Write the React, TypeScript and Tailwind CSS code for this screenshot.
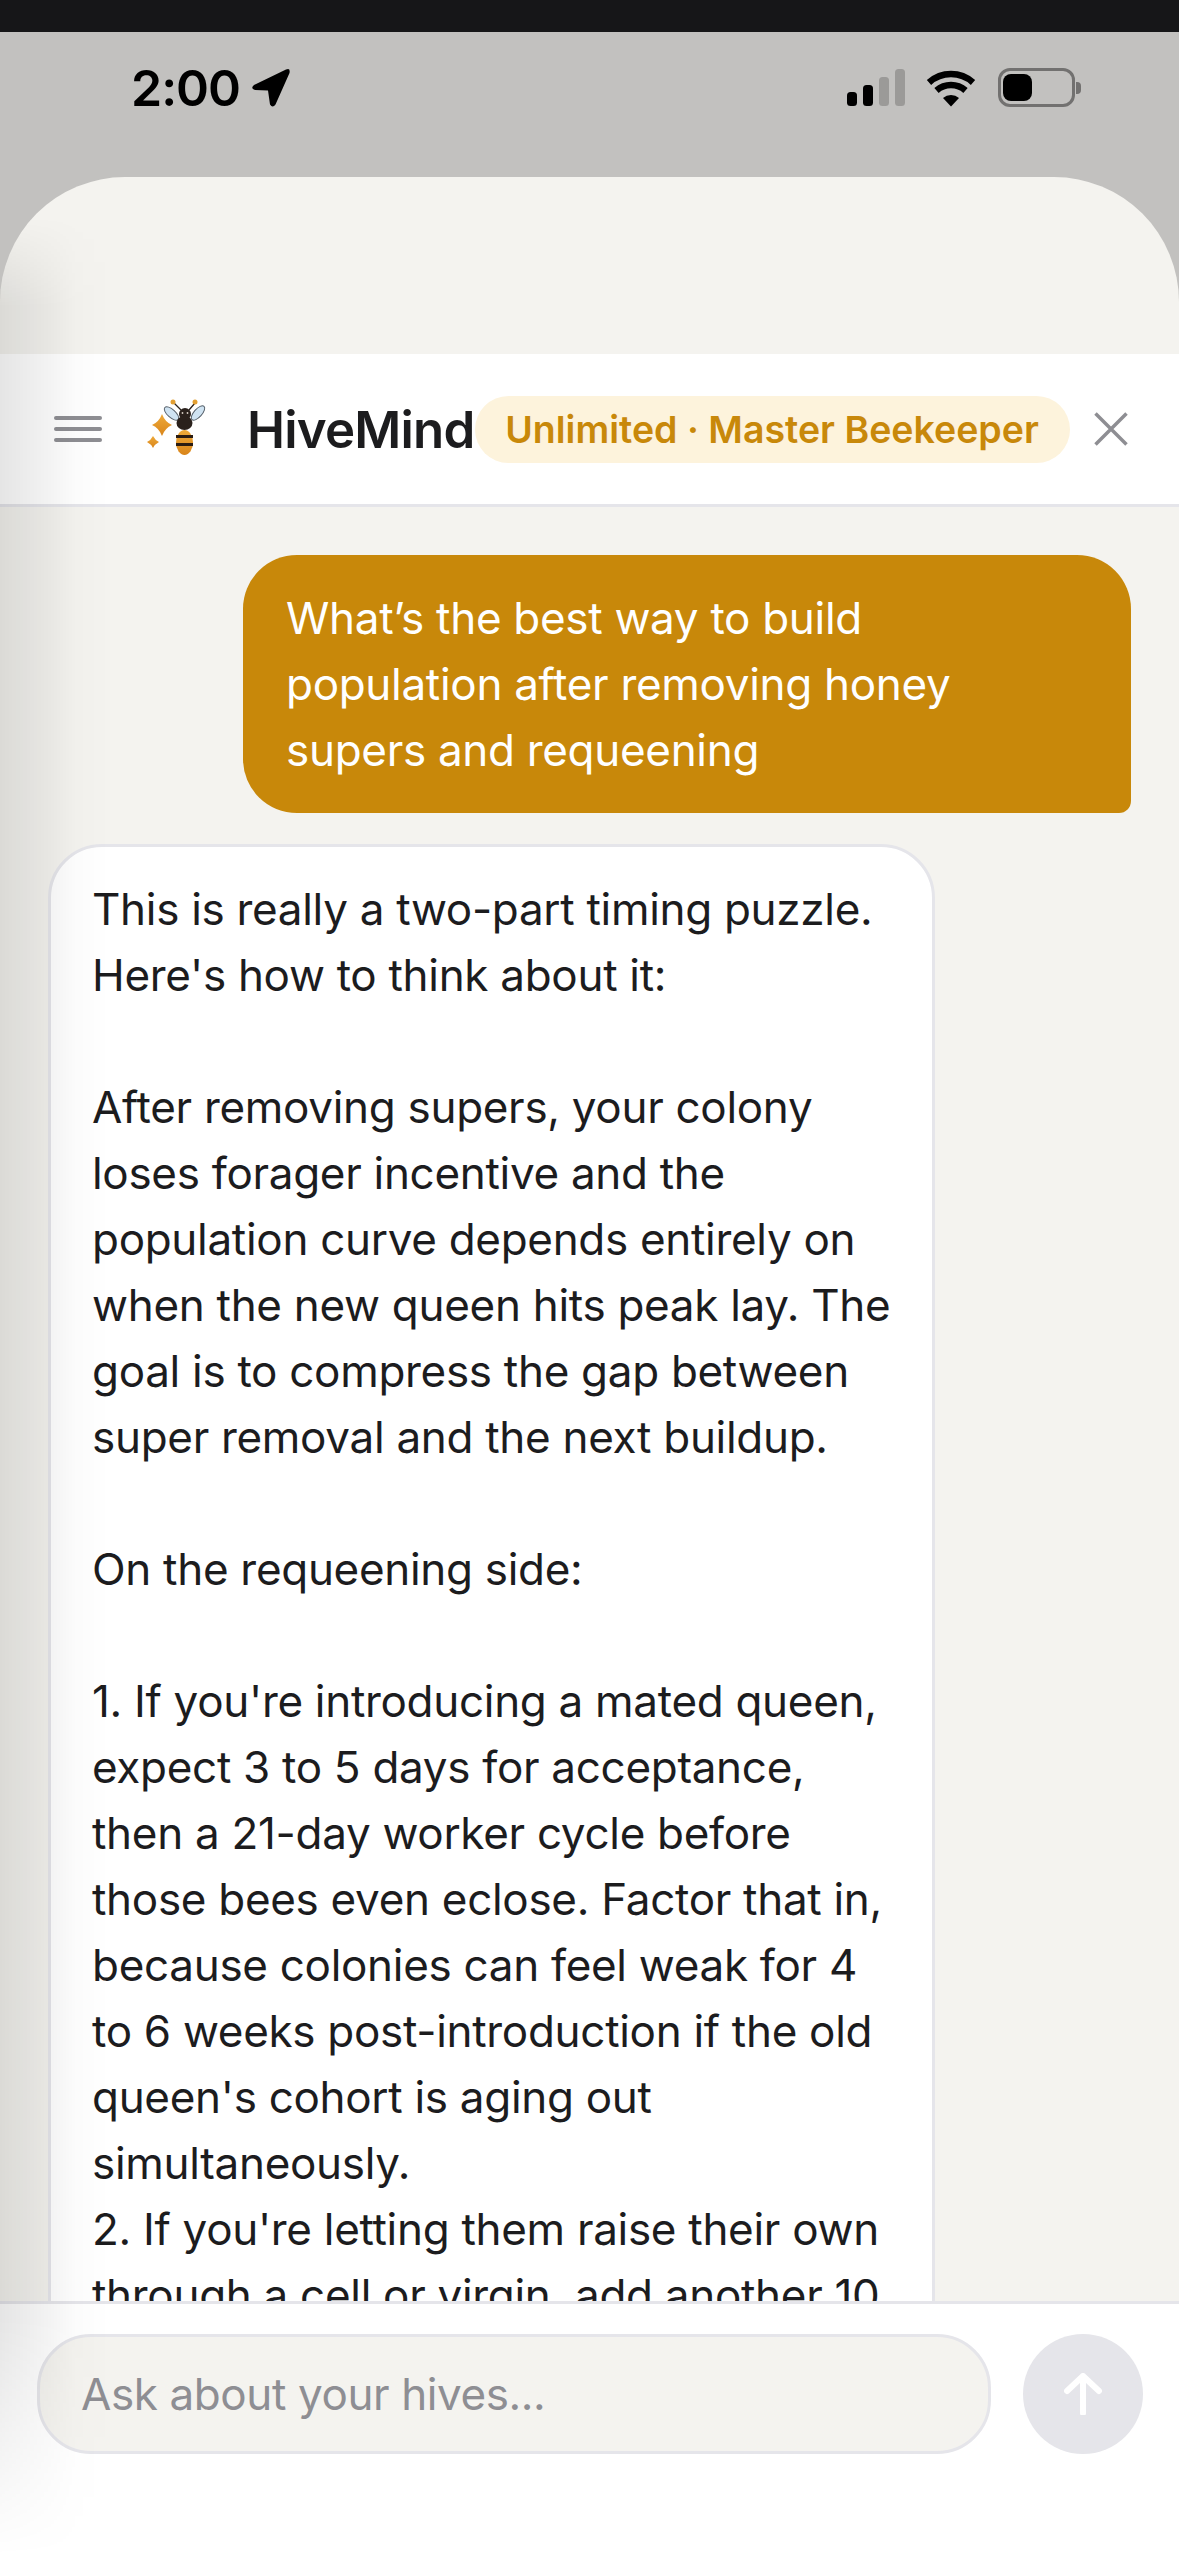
const font = "[font-family:Inter,'Noto_Sans',sans-serif]";

function Signal() {
  return (
    <svg width="60" height="38" viewBox="0 0 60 38">
      <rect x="1" y="23" width="10" height="14" rx="3.5" fill="#000" />
      <rect x="17" y="16" width="10" height="21" rx="3.5" fill="#000" />
      <rect x="33" y="8" width="10" height="29" rx="3.5" fill="#9b9a98" />
      <rect x="49" y="0" width="10" height="37" rx="3.5" fill="#9b9a98" />
    </svg>
  );
}

function Wifi() {
  return (
    <svg width="50" height="38" viewBox="0 0 50 38" fill="none">
      <path d="M3 13.5A33 33 0 0 1 47 13.5" stroke="#000" strokeWidth="6.5" />
      <path d="M10.5 21.5A22 22 0 0 1 39.5 21.5" stroke="#000" strokeWidth="6.5" />
      <path d="M25 37.5L17 29A12 12 0 0 1 33 29Z" fill="#000" />
    </svg>
  );
}

function Battery() {
  return (
    <div className="flex items-center">
      <div className="flex h-[39px] w-[77px] items-center rounded-[12px] border-[3px] border-[#727170] p-[2px]">
        <div className="h-[27px] w-[29px] rounded-[8px] bg-black" />
      </div>
      <div className="ml-[1px] h-[12px] w-[5px] rounded-r-[4px] bg-[#727170]" />
    </div>
  );
}

function LocationArrow() {
  return (
    <svg width="40" height="40" viewBox="0 0 40 40">
      <path d="M35 1.5L3 17Q-1 20.500 4 22L17 22.500L19 36.500Q21.500 40.500 24.500 36.500L38.500 5Q39.500 -0.500 35 1.500Z" fill="#000" />
    </svg>
  );
}

function BeeLogo() {
  return (
    <svg width="60" height="58" viewBox="146 397 60 58">
      <defs>
        <linearGradient id="gold" x1="0" y1="0" x2="0" y2="1">
          <stop offset="0" stopColor="#eeaa3a" />
          <stop offset="1" stopColor="#d9851a" />
        </linearGradient>
      </defs>
      <path d="M162 412Q165 420 172 423Q165 426 162 434Q159 426 152 423Q159 420 162 412Z" fill="url(#gold)" />
      <path d="M153 434Q155 438 159 440Q155 442 153 446Q151 442 147 440Q151 438 153 434Z" fill="url(#gold)" />
      <ellipse cx="171.500" cy="411.500" rx="9" ry="4" transform="rotate(42 171.500 411.500)" fill="#cfe3f2" stroke="#56606a" strokeWidth="1" />
      <ellipse cx="198" cy="411" rx="9" ry="4" transform="rotate(-48 198 411)" fill="#cfe3f2" stroke="#56606a" strokeWidth="1" />
      <path d="M181 408L174 401M189 408L195 401" stroke="#2a211c" strokeWidth="1.300" />
      <circle cx="173" cy="400" r="2.500" fill="#e3a033" />
      <circle cx="195" cy="400" r="2.500" fill="#e3a033" />
      <ellipse cx="184.500" cy="421" rx="8" ry="7" fill="#2a211c" />
      <circle cx="185" cy="412" r="6" fill="#2a211c" />
      <circle cx="182.500" cy="411" r="0.900" fill="#d8cfc4" />
      <circle cx="187.500" cy="411" r="0.900" fill="#d8cfc4" />
      <ellipse cx="184.500" cy="440.500" rx="8.500" ry="12.500" fill="url(#gold)" />
      <rect x="176" y="433" width="17" height="3" fill="#2a1c12" />
      <rect x="176" y="441" width="17" height="3" fill="#2a1c12" />
    </svg>
  );
}

function Header() {
  return (
    <header className="flex h-[153px] shrink-0 items-center border-b-[3px] border-[#e5e5ea] bg-white pl-[54px]">
      <div className="flex w-[48px] flex-col gap-[7px]">
        <div className="h-[4px] rounded-full bg-[#8e8e93]" />
        <div className="h-[4px] rounded-full bg-[#8e8e93]" />
        <div className="h-[4px] rounded-full bg-[#8e8e93]" />
      </div>
      <div className="mb-[3px] ml-[44px]">
        <BeeLogo />
      </div>
      <div className="ml-[41px] text-[51px] leading-none font-semibold tracking-[-0.8px] text-[#1c1c1e]">HiveMind</div>
      <div className="flex h-[67px] w-[595px] items-center justify-center rounded-full bg-[#fdf3dc] pt-[2px] text-[37.5px] font-semibold text-[#c8880a]">
        Unlimited · Master Beekeeper
      </div>
      <svg className="ml-[24px]" width="34" height="34" viewBox="0 0 34 34" fill="none">
        <path d="M1.500 1.500L32.500 32.500M32.500 1.500L1.500 32.500" stroke="#8e8e93" strokeWidth="3.500" />
      </svg>
    </header>
  );
}

const answer = [
  "This is really a two-part timing puzzle. Here's how to think about it:",
  "",
  "After removing supers, your colony loses forager incentive and the population curve depends entirely on when the new queen hits peak lay. The goal is to compress the gap between super removal and the next buildup.",
  "",
  "On the requeening side:",
  "",
  "1. If you're introducing a mated queen, expect 3 to 5 days for acceptance, then a 21-day worker cycle before those bees even eclose. Factor that in, because colonies can feel weak for 4 to 6 weeks post-introduction if the old queen's cohort is aging out simultaneously.",
  "2. If you're letting them raise their own through a cell or virgin, add another 10 days to that timeline and watch for a broodless gap.",
];

export default function App() {
  return (
    <div className={`flex h-[2556px] w-[1179px] flex-col overflow-hidden bg-[#c2c1bf] ${font}`}>
      <div className="h-[32px] shrink-0 bg-[#161618]" />

      <div className="flex h-[145px] shrink-0 items-start justify-between pt-[36px] pr-[98px] pl-[131px]">
        <div className="flex items-center gap-[11px]">
          <span className="text-[50px] leading-[40px] font-semibold tracking-[-1px] text-black">2:00</span>
          <LocationArrow />
        </div>
        <div className="flex items-center">
          <Signal />
          <div className="ml-[20px]">
            <Wifi />
          </div>
          <div className="ml-[22px]">
            <Battery />
          </div>
        </div>
      </div>

      <div className="relative flex min-h-0 flex-1 flex-col overflow-hidden rounded-t-[125px] bg-[#f4f3ef]">
        <div className="h-[177px] shrink-0" />
        <Header />

        <main className="flex min-h-0 flex-1 flex-col gap-[31px] overflow-hidden px-[48px] pt-[48px] text-[44px] leading-[66px] tracking-[-0.3px]">
          <div className="ml-[195px] shrink-0 rounded-t-[54px] rounded-bl-[54px] rounded-br-[12px] bg-[#c8880a] py-[30px] pr-[44px] pl-[43px] text-white">
            What’s the best way to build population after removing honey supers and requeening
          </div>
          <div className="mr-[196px] shrink-0 rounded-[54px] border-[3px] border-[#e5e5ea] bg-white py-[29px] pr-[30px] pl-[41px] text-[#1c1c1e]">
            {answer.map((line, i) => (
              <p key={i} className="min-h-[66px]">{line}</p>
            ))}
          </div>
        </main>

        <footer className="relative z-10 h-[255px] shrink-0 border-t-[3px] border-[#e5e5ea] bg-white pt-[30px] pr-[36px] pl-[37px]">
          <div className="flex items-center gap-[32px]">
            <div className="flex h-[120px] flex-1 items-center rounded-[54px] border-[3px] border-[#e5e5ea] bg-[#f4f3ef] pl-[41px] text-[44px] tracking-[-0.4px] text-[#8e8e93]">
              Ask about your hives...
            </div>
            <div className="flex h-[120px] w-[120px] items-center justify-center rounded-full bg-[#e5e5ea]">
              <svg width="38" height="42" viewBox="0 0 38 42" fill="none">
                <path d="M19 40V3M3 18L19 3L35 18" stroke="#fff" strokeWidth="6" strokeLinecap="round" strokeLinejoin="round" />
              </svg>
            </div>
          </div>
        </footer>

        <div className="pointer-events-none absolute inset-y-0 left-0 z-20 w-[110px] bg-[linear-gradient(to_right,rgba(0,0,0,0.1),rgba(0,0,0,0.05)_42%,rgba(0,0,0,0.01)_70%,transparent)] [mask-image:linear-gradient(to_bottom,transparent_40px,black_130px,black_90%,transparent)]" />
      </div>
    </div>
  );
}
